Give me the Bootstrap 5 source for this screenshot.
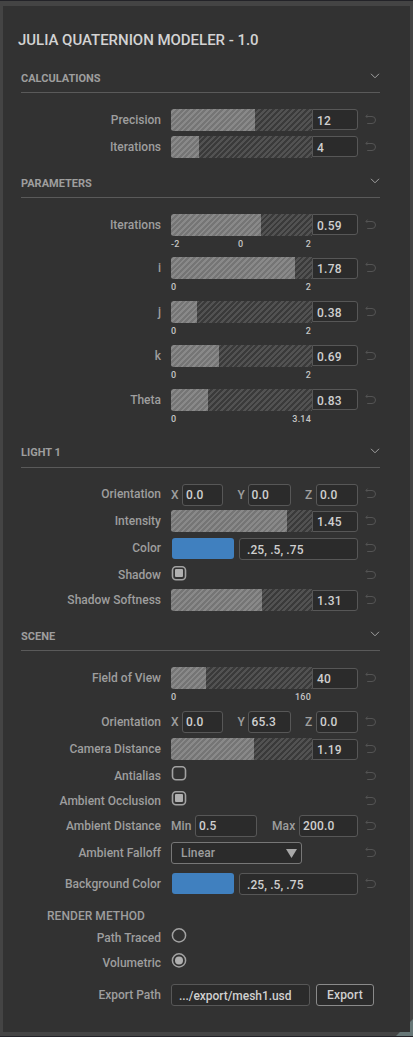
<!DOCTYPE html>
<html lang="en">
<head>
<meta charset="utf-8">
<meta name="viewport" content="width=device-width, initial-scale=1">
<title>Julia Quaternion Modeler</title>
<link href="https://cdn.jsdelivr.net/npm/bootstrap@5.3.0/dist/css/bootstrap.min.css" rel="stylesheet">
<style>
  body { background:#444; color:#9e9e9e; font:500 12px/22px Roboto,"Liberation Sans",sans-serif; letter-spacing:0; }
  .frame { width:413px; height:1037px; padding:5px 3px 5px; border-top:1px solid #232328; border-bottom:1px solid #232328; }
  .panel { position:relative; z-index:1; background:#323232; height:1026px; width:407px; padding:22px 0 0 18px; }
  .title { font-size:15px; line-height:24px; font-weight:500; color:#d3d3d3; letter-spacing:-.03px; margin:0 0 0 -3px; height:39px; }
  .sect-head { width:359px; height:26px; border-bottom:1px solid #5a5a5a; margin-bottom:16px; font-size:11px; letter-spacing:0; font-weight:700; color:#9e9e9e; }
  .drop span { padding-top:1px; }
  .sect-gap { margin-top:9px; }
  .sect-gap-lg { margin-top:15px; }
  .prop { display:grid; grid-template-columns:140px 187px 10px; column-gap:10px; align-items:start; }
  .prop > label { text-align:right; white-space:nowrap; grid-column:1; }
  .prop > .undo { grid-column:3; }
  .r21{height:21px}.r24{height:24px}.r25{height:25px}.r26{height:26px}.r27{height:27px}.r28{height:28px}.r31{height:31px}.r32{height:32px}.r43{height:43px}.r44{height:44px}
  .track { width:141px; height:22px; border-radius:3px 0 0 3px; overflow:hidden; background:repeating-linear-gradient(135deg,#3a3a3a 0 2px,#525252 2px 4px); }
  .fill { height:22px; background:repeating-linear-gradient(135deg,#757575 0 2px,#898989 2px 4px); }
  .box { height:22px; border:1px solid #575757; border-radius:3px; background:#2b2b2b; color:#d0d0d0; padding-left:4px; line-height:22px; white-space:nowrap; letter-spacing:.25px; }
  .num { width:46px; height:21px; border-radius:0 3px 3px 0; }
  .low { margin-top:1px; line-height:20px; }
  .ticks { width:140px; font-size:9px; line-height:17px; color:#c4c4c4; letter-spacing:.2px; }
  .mid { padding-right:4px; }
  .undo { width:11px; height:11px; margin:5px 0 0 -3px; display:block; }
  .high > label { margin-top:-1px; }
  .high > .undo { margin-top:4px; }
  .chev { width:10px; height:6px; margin-top:6px; }
  .swatch { width:62px; height:21px; border-radius:3px; background:#4080bf; margin-left:1px; }
  .mark-icon { width:16px; height:16px; display:block; }
  .combo { width:131px; border-color:#777; color:#9e9e9e; padding:0 4px 0 9px; letter-spacing:.15px; }
  .axes { letter-spacing:.1px; }
  .axes .box { padding-left:3px; line-height:20px; letter-spacing:.2px; }
  .w41{width:41px}.w42{width:42px}.w43{width:43px}.w59{width:59px}.w62{width:62px}
  .rgb { width:119px; padding-left:7px; letter-spacing:.1px; }
  .path { width:139px; padding-left:7px; letter-spacing:-.05px; }
  .axis { width:11px; }
  .axis-y { width:10px; }
  .min-l { width:24px; } .max-l { width:27px; }
  .render-h { margin:8px 0 0 26px; line-height:22px; height:22px; letter-spacing:.05px; }
  .export-btn { width:58px; height:22px; border:1px solid #8a8a8a; border-radius:3px; background:#2b2b2b; color:#d0d0d0; font:inherit; letter-spacing:.2px; line-height:20px; padding:0; }
  .export-row { column-gap:6px; }
  .corner { position:absolute; right:0; bottom:0; width:17px; height:17px; background:#677777; clip-path:polygon(100% 0,100% 100%,0 100%); z-index:0; }
</style>
</head>
<body>
<svg width="0" height="0" class="d-none">
  <symbol id="undo" viewBox="0 0 11 11"><path d="M1 2.5H7A3.5 3.5 0 0 1 7 9.5H2.2M2.6 .6L.9 2.5L2.2 3.8" fill="none" stroke="#545454" stroke-width="1"/></symbol>
  <symbol id="chev" viewBox="0 0 10 6"><path d="M1 .8L5 4.8L9 .8" fill="none" stroke="#a0a0a0" stroke-width="1"/></symbol>
  <symbol id="box-off" viewBox="0 0 16 16"><rect x="1.5" y="1.7" width="13" height="13" rx="3.5" fill="none" stroke="#a2a2a2" stroke-width="1.6"/></symbol>
  <symbol id="box-on" viewBox="0 0 16 16"><use href="#box-off"/><rect x="4" y="4.1" width="8" height="8" rx="1" fill="#b0b0b0"/></symbol>
  <symbol id="radio-off" viewBox="0 0 16 16"><circle cx="8" cy="8.4" r="6.6" fill="none" stroke="#a2a2a2" stroke-width="1.5"/></symbol>
  <symbol id="radio-on" viewBox="0 0 16 16"><use href="#radio-off"/><circle cx="8" cy="8.4" r="4" fill="#b0b0b0"/></symbol>
</svg>
<div class="frame position-relative overflow-hidden">
<main class="panel">
  <h1 class="title">JULIA QUATERNION MODELER - 1.0</h1>

  <div class="sect-head drop d-flex justify-content-between"><span>CALCULATIONS</span><svg class="chev"><use href="#chev"/></svg></div>
  <div class="prop r27"><label>Precision</label><div class="d-flex"><div class="track"><div class="fill" style="width:59.6%"></div></div><div class="box num">12</div></div><svg class="undo"><use href="#undo"/></svg></div>
  <div class="prop r27"><label>Iterations</label><div class="d-flex"><div class="track"><div class="fill" style="width:19.9%"></div></div><div class="box num">4</div></div><svg class="undo"><use href="#undo"/></svg></div>

  <div class="sect-head drop sect-gap d-flex justify-content-between"><span>PARAMETERS</span><svg class="chev"><use href="#chev"/></svg></div>
  <div class="prop r43"><label>Iterations</label><div><div class="d-flex"><div class="track"><div class="fill" style="width:63.8%"></div></div><div class="box num">0.59</div></div><div class="ticks d-flex justify-content-between"><span>-2</span><span class="mid">0</span><span>2</span></div></div><svg class="undo"><use href="#undo"/></svg></div>
  <div class="prop r44"><label>i</label><div><div class="d-flex"><div class="track"><div class="fill" style="width:87.9%"></div></div><div class="box num low">1.78</div></div><div class="ticks d-flex justify-content-between"><span>0</span><span>2</span></div></div><svg class="undo"><use href="#undo"/></svg></div>
  <div class="prop r44"><label>j</label><div><div class="d-flex"><div class="track"><div class="fill" style="width:18.4%"></div></div><div class="box num">0.38</div></div><div class="ticks d-flex justify-content-between"><span>0</span><span>2</span></div></div><svg class="undo"><use href="#undo"/></svg></div>
  <div class="prop r44"><label>k</label><div><div class="d-flex"><div class="track"><div class="fill" style="width:34%"></div></div><div class="box num">0.69</div></div><div class="ticks d-flex justify-content-between"><span>0</span><span>2</span></div></div><svg class="undo"><use href="#undo"/></svg></div>
  <div class="prop r44"><label>Theta</label><div><div class="d-flex"><div class="track"><div class="fill" style="width:26.2%"></div></div><div class="box num">0.83</div></div><div class="ticks d-flex justify-content-between"><span>0</span><span>3.14</span></div></div><svg class="undo"><use href="#undo"/></svg></div>

  <div class="sect-head sect-gap d-flex justify-content-between"><span>LIGHT 1</span><svg class="chev"><use href="#chev"/></svg></div>
  <div class="prop high r26"><label>Orientation</label><div class="axes d-flex justify-content-between"><div class="d-flex"><span class="axis">X</span><div class="box w41">0.0</div></div><div class="d-flex"><span class="axis-y">Y</span><div class="box w43">0.0</div></div><div class="d-flex"><span class="axis">Z</span><div class="box w42">0.0</div></div></div><svg class="undo"><use href="#undo"/></svg></div>
  <div class="prop r28"><label>Intensity</label><div class="d-flex"><div class="track"><div class="fill" style="width:82.3%"></div></div><div class="box num low">1.45</div></div><svg class="undo"><use href="#undo"/></svg></div>
  <div class="prop high r27"><label>Color</label><div class="d-flex justify-content-between"><div class="swatch"></div><div class="box rgb">.25, .5, .75</div></div><svg class="undo"><use href="#undo"/></svg></div>
  <div class="prop high r24"><label>Shadow</label><svg class="mark-icon"><use href="#box-on"/></svg><svg class="undo"><use href="#undo"/></svg></div>
  <div class="prop r21"><label>Shadow Softness</label><div class="d-flex"><div class="track"><div class="fill" style="width:64.5%"></div></div><div class="box num low">1.31</div></div><svg class="undo"><use href="#undo"/></svg></div>

  <div class="sect-head drop sect-gap-lg d-flex justify-content-between"><span>SCENE</span><svg class="chev"><use href="#chev"/></svg></div>
  <div class="prop r44"><label>Field of View</label><div><div class="d-flex"><div class="track"><div class="fill" style="width:24.8%"></div></div><div class="box num low">40</div></div><div class="ticks d-flex justify-content-between"><span>0</span><span>160</span></div></div><svg class="undo"><use href="#undo"/></svg></div>
  <div class="prop r27"><label>Orientation</label><div class="axes d-flex justify-content-between"><div class="d-flex"><span class="axis">X</span><div class="box w41">0.0</div></div><div class="d-flex"><span class="axis-y">Y</span><div class="box w43">65.3</div></div><div class="d-flex"><span class="axis">Z</span><div class="box w42">0.0</div></div></div><svg class="undo"><use href="#undo"/></svg></div>
  <div class="prop r27"><label>Camera Distance</label><div class="d-flex"><div class="track"><div class="fill" style="width:58.9%"></div></div><div class="box num low">1.19</div></div><svg class="undo"><use href="#undo"/></svg></div>
  <div class="prop r25"><label>Antialias</label><svg class="mark-icon"><use href="#box-off"/></svg><svg class="undo"><use href="#undo"/></svg></div>
  <div class="prop r25"><label>Ambient Occlusion</label><svg class="mark-icon"><use href="#box-on"/></svg><svg class="undo"><use href="#undo"/></svg></div>
  <div class="prop r27"><label>Ambient Distance</label><div class="axes d-flex justify-content-between"><div class="d-flex"><span class="min-l">Min</span><div class="box w62">0.5</div></div><div class="d-flex"><span class="max-l">Max</span><div class="box w59">200.0</div></div></div><svg class="undo"><use href="#undo"/></svg></div>
  <div class="prop r31"><label>Ambient Falloff</label><div class="box combo d-flex justify-content-between align-items-center"><span>Linear</span><svg width="11" height="9"><path d="M0 0H11L5.5 9Z" fill="#a8a8a8"/></svg></div><svg class="undo"><use href="#undo"/></svg></div>
  <div class="prop r24"><label>Background Color</label><div class="d-flex justify-content-between"><div class="swatch"></div><div class="box rgb">.25, .5, .75</div></div><svg class="undo"><use href="#undo"/></svg></div>

  <div class="render-h">RENDER METHOD</div>
  <div class="prop r25"><label>Path Traced</label><svg class="mark-icon"><use href="#radio-off"/></svg></div>
  <div class="prop r32"><label>Volumetric</label><svg class="mark-icon"><use href="#radio-on"/></svg></div>
  <div class="prop r27"><label>Export Path</label><div class="export-row d-flex"><div class="box path flex-shrink-0">.../export/mesh1.usd</div><button class="export-btn flex-shrink-0">Export</button></div></div>
</main>
<div class="corner"></div>
</div>
<script src="https://cdn.jsdelivr.net/npm/bootstrap@5.3.0/dist/js/bootstrap.bundle.min.js"></script>
</body>
</html>
